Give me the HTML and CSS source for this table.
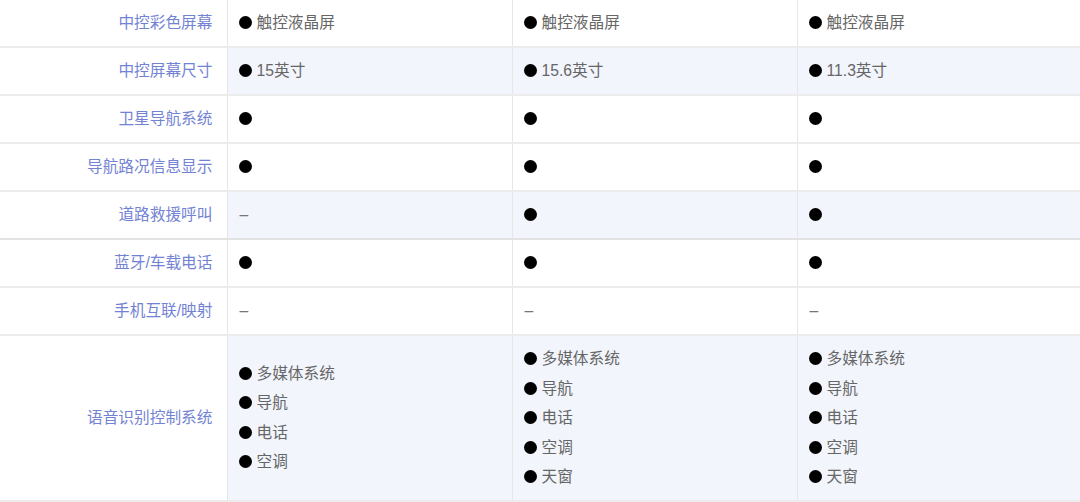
FILE: index.html
```html
<!DOCTYPE html>
<html lang="zh">
<head>
<meta charset="utf-8">
<link rel="stylesheet" href="styles.css">
</head>
<body>
<table class="spec">
  <colgroup>
    <col class="c-label"><col class="c-val"><col class="c-val"><col>
  </colgroup>
  <tr>
    <th>中控彩色屏幕</th>
    <td><span class="dot"></span>触控液晶屏</td>
    <td><span class="dot"></span>触控液晶屏</td>
    <td><span class="dot"></span>触控液晶屏</td>
  </tr>
  <tr class="alt">
    <th>中控屏幕尺寸</th>
    <td><span class="dot"></span>15英寸</td>
    <td><span class="dot"></span>15.6英寸</td>
    <td><span class="dot"></span>11.3英寸</td>
  </tr>
  <tr>
    <th>卫星导航系统</th>
    <td><span class="dot"></span></td>
    <td><span class="dot"></span></td>
    <td><span class="dot"></span></td>
  </tr>
  <tr>
    <th>导航路况信息显示</th>
    <td><span class="dot"></span></td>
    <td><span class="dot"></span></td>
    <td><span class="dot"></span></td>
  </tr>
  <tr class="alt sep">
    <th>道路救援呼叫</th>
    <td><span class="dash">–</span></td>
    <td><span class="dot"></span></td>
    <td><span class="dot"></span></td>
  </tr>
  <tr>
    <th>蓝牙/车载电话</th>
    <td><span class="dot"></span></td>
    <td><span class="dot"></span></td>
    <td><span class="dot"></span></td>
  </tr>
  <tr>
    <th>手机互联/映射</th>
    <td><span class="dash">–</span></td>
    <td><span class="dash">–</span></td>
    <td><span class="dash">–</span></td>
  </tr>
  <tr class="alt tall">
    <th>语音识别控制系统</th>
    <td>
      <div class="item"><span class="dot"></span>多媒体系统</div>
      <div class="item"><span class="dot"></span>导航</div>
      <div class="item"><span class="dot"></span>电话</div>
      <div class="item"><span class="dot"></span>空调</div>
    </td>
    <td>
      <div class="item"><span class="dot"></span>多媒体系统</div>
      <div class="item"><span class="dot"></span>导航</div>
      <div class="item"><span class="dot"></span>电话</div>
      <div class="item"><span class="dot"></span>空调</div>
      <div class="item"><span class="dot"></span>天窗</div>
    </td>
    <td>
      <div class="item"><span class="dot"></span>多媒体系统</div>
      <div class="item"><span class="dot"></span>导航</div>
      <div class="item"><span class="dot"></span>电话</div>
      <div class="item"><span class="dot"></span>空调</div>
      <div class="item"><span class="dot"></span>天窗</div>
    </td>
  </tr>
</table>
</body>
</html>
```

FILE: styles.css
```css
html, body {
  margin: 0;
  padding: 0;
  background: #ffffff;
}

body {
  font-family: "Liberation Sans", "Noto Sans CJK SC", sans-serif;
  font-size: 15.7px;
  color: #666666;
}

.spec {
  width: 1080px;
  table-layout: fixed;
  border-collapse: collapse;
}

.c-label { width: 227px; }
.c-val { width: 285px; }

.spec th,
.spec td {
  height: 46px;
  padding: 0;
  border-bottom: 2px solid #ececec;
  vertical-align: middle;
  line-height: 20px;
}

.spec th {
  font-weight: normal;
  text-align: right;
  padding-right: 14px;
  color: #7383d4;
  border-right: 1px solid #e4e4e4;
}

.spec td {
  text-align: left;
  padding-left: 11px;
  border-right: 1px solid #e6e6e6;
}

.spec td:last-child { border-right: none; }

.alt td { background: #f2f5fc; }

.sep th, .sep td { border-bottom-color: #e2e2e2; }

.tall th, .tall td {
  height: 147px;
  padding-top: 8px;
  padding-bottom: 8px;
}

.tall th { padding-top: 0; padding-bottom: 0; }

.item {
  line-height: 29.5px;
  height: 29.5px;
}

.dot {
  display: inline-block;
  width: 13px;
  height: 13px;
  border-radius: 50%;
  background: #000;
  margin-right: 5px;
  vertical-align: -1px;
}

.dash {
  display: inline-block;
  padding-left: 1px;
  color: #777;
}
```
